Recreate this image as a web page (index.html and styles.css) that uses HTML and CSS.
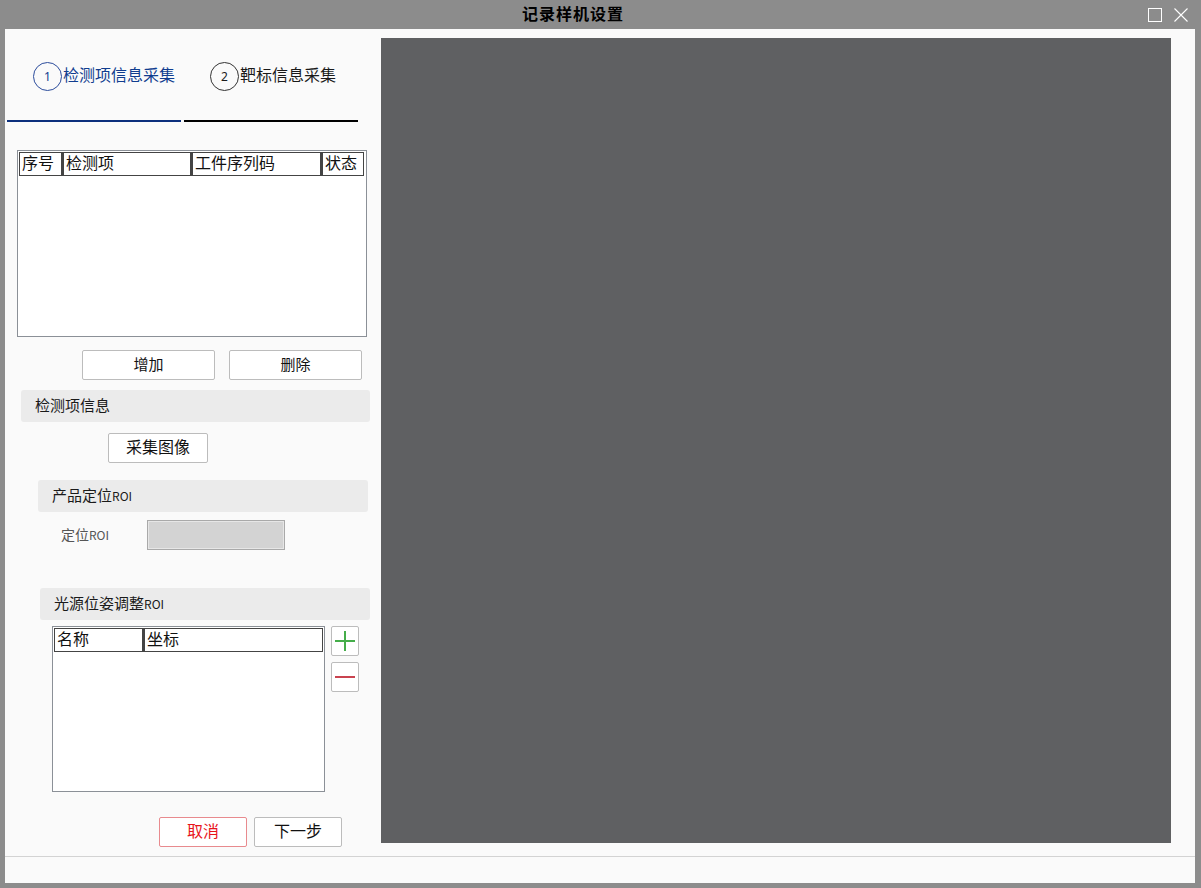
FILE: index.html
```html
<!DOCTYPE html>
<html lang="zh">
<head>
<meta charset="utf-8">
<title>记录样机设置</title>
<link rel="stylesheet" href="styles.css">
</head>
<body>
<div class="window">
  <div class="titlebar">
    <div class="title">记录样机设置</div>
    <div class="winbtns">
      <svg class="wb" width="14" height="14" viewBox="0 0 14 14"><rect x="0.5" y="0.5" width="13" height="13" fill="none" stroke="#fff" stroke-width="1"/></svg>
      <svg class="wb" width="14" height="14" viewBox="0 0 14 14"><path d="M0.5 0.5 L13.5 13.5 M13.5 0.5 L0.5 13.5" stroke="#fff" stroke-width="1.1" fill="none"/></svg>
    </div>
  </div>
  <div class="client">
    <div class="main">
      <div class="left">
        <div class="tabs">
          <div class="tab active"><span class="num">1</span><span class="tlabel">检测项信息采集</span></div>
          <div class="tab"><span class="num">2</span><span class="tlabel">靶标信息采集</span></div>
        </div>
        <div class="grid grid1">
          <div class="ghead">
            <div class="hc c1">序号</div>
            <div class="hc c2">检测项</div>
            <div class="hc c3">工件序列码</div>
            <div class="hc c4">状态</div>
          </div>
        </div>
        <div class="btnrow">
          <button class="btn wide">增加</button>
          <button class="btn wide">删除</button>
        </div>
        <div class="section s1">检测项信息</div>
        <button class="btn capture">采集图像</button>
        <div class="section s2">产品定位<span class="small">ROI</span></div>
        <div class="field">
          <span class="flabel">定位<span class="small">ROI</span></span>
          <div class="finput"></div>
        </div>
        <div class="section s3">光源位姿调整<span class="small">ROI</span></div>
        <div class="roirow">
          <div class="grid grid2">
            <div class="ghead">
              <div class="hc d1">名称</div>
              <div class="hc d2">坐标</div>
            </div>
          </div>
          <div class="sidebtns">
            <button class="ibtn"><svg width="22" height="22" viewBox="0 0 22 22"><path d="M11 1 V21 M1 11 H21" stroke="#45ad4a" stroke-width="2" fill="none"/></svg></button>
            <button class="ibtn"><svg width="22" height="22" viewBox="0 0 22 22"><path d="M1 11 H21" stroke="#c9434f" stroke-width="2" fill="none"/></svg></button>
          </div>
        </div>
        <div class="footer">
          <button class="btn small-btn cancel">取消</button>
          <button class="btn small-btn">下一步</button>
        </div>
      </div>
      <div class="canvas"></div>
    </div>
    <div class="statusbar"></div>
  </div>
</div>
</body>
</html>
```

FILE: styles.css
```css
* { box-sizing: border-box; }
html, body { margin: 0; padding: 0; }
body {
  width: 1201px;
  height: 888px;
  overflow: hidden;
  font-family: "Noto Sans CJK SC", "Noto Sans", sans-serif;
  color: #1a1a1a;
}
.window {
  width: 1201px;
  height: 888px;
  background: #8c8c8c;
  padding: 0 5px 5px 5px;
  display: flex;
  flex-direction: column;
}
.titlebar {
  height: 29px;
  display: flex;
  align-items: center;
  margin: 0 -5px;
}
.title {
  flex: 1;
  text-align: center;
  font-weight: bold;
  font-size: 16px;
  line-height: 27px;
  padding-bottom: 2px;
  color: #000;
  letter-spacing: 1px;
}
.winbtns {
  width: 55px;
  display: flex;
  gap: 12px;
  padding-left: 2px;
  align-items: center;
}
.wb { display: block; }
.client {
  flex: 1;
  background: #fafafa;
  margin-right: 1px;
  display: flex;
  flex-direction: column;
}
.main {
  height: 827px;
  display: flex;
}
.left {
  width: 376px;
  display: flex;
  flex-direction: column;
  align-items: flex-start;
}
.canvas {
  flex: 1;
  background: #5f6062;
  margin: 9px 24px 13px 0;
}
.statusbar {
  flex: 1;
  border-top: 1px solid #d3d3d3;
}

/* tabs */
.tabs {
  display: flex;
  gap: 3px;
  margin-left: 2px;
  margin-top: 33px;
}
.tab {
  width: 174px;
  height: 60px;
  border-bottom: 2px solid #000;
  display: flex;
  align-items: flex-start;
  padding-left: 26px;
  color: #1a1a1a;
}
.tab.active {
  border-bottom-color: #0c2f7c;
  color: #103d8f;
}
.num {
  width: 29px;
  height: 29px;
  border: 1px solid #333;
  border-radius: 50%;
  display: flex;
  align-items: center;
  justify-content: center;
  font-family: "Noto Sans", "Liberation Sans", sans-serif;
  font-size: 12px;
  line-height: 1;
  margin-right: 1px;
}
.tab.active .num { border-color: #2b4c9c; }
.tlabel {
  font-size: 16px;
  line-height: 25px;
}

/* grids */
.grid {
  background: #fff;
  border: 1px solid #8b9097;
  padding: 1px;
}
.grid1 {
  width: 350px;
  height: 187px;
  margin-left: 12px;
  margin-top: 28px;
}
.ghead { display: flex; }
.hc {
  height: 24px;
  border: 1px solid #444;
  font-size: 16px;
  line-height: 18px;
  padding-left: 2px;
  color: #111;
  white-space: nowrap;
}
.hc + .hc { border-left-width: 2px; }
.c1 { width: 43px; }
.c2 { width: 129px; }
.c3 { width: 130px; }
.c4 { width: 43px; }

/* buttons */
.btn {
  font-family: inherit;
  font-size: 15px;
  background: #fff;
  border: 1px solid #bcbcbc;
  border-radius: 2px;
  height: 30px;
  padding: 0 0 4px 0;
  color: #111;
  line-height: 1;
}
.btnrow {
  display: flex;
  gap: 14px;
  margin-left: 77px;
  margin-top: 13px;
}
.wide { width: 133px; }
.capture {
  width: 100px;
  margin-left: 103px;
  margin-top: 11px;
  font-size: 16px;
}

/* sections */
.section {
  background: #ebebeb;
  border-radius: 3px;
  height: 32px;
  font-size: 15px;
  line-height: 30px;
  padding-left: 14px;
  color: #1a1a1a;
}
.small { font-size: 12px; }
.s1 { width: 349px; margin-left: 16px; margin-top: 10px; }
.s2 { width: 330px; margin-left: 33px; margin-top: 17px; }
.s3 { width: 330px; margin-left: 35px; margin-top: 38px; }

.field {
  display: flex;
  align-items: center;
  margin-left: 56px;
  margin-top: 8px;
  height: 30px;
}
.flabel {
  width: 86px;
  font-size: 14px;
  color: #555;
  padding-bottom: 2px;
}
.finput {
  width: 138px;
  height: 30px;
  background: #d3d3d3;
  border: 1px solid #a9a9a9;
  box-shadow: inset 0 0 0 1px #e6e6e6;
}

.roirow {
  display: flex;
  gap: 6px;
  margin-left: 47px;
  margin-top: 6px;
}
.grid2 {
  width: 273px;
  height: 166px;
}
.d1 { width: 89px; }
.d2 { width: 180px; }
.sidebtns {
  display: flex;
  flex-direction: column;
  gap: 6px;
}
.ibtn {
  width: 28px;
  height: 30px;
  background: #fff;
  border: 1px solid #bcbcbc;
  border-radius: 2px;
  padding: 0;
  display: flex;
  align-items: center;
  justify-content: center;
}
.ibtn svg { display: block; }

.footer {
  display: flex;
  gap: 7px;
  margin-left: 154px;
  margin-top: 25px;
}
.small-btn { width: 88px; font-size: 16px; }
.cancel {
  color: #e8141b;
  border-color: #e88a8e;
}
```
